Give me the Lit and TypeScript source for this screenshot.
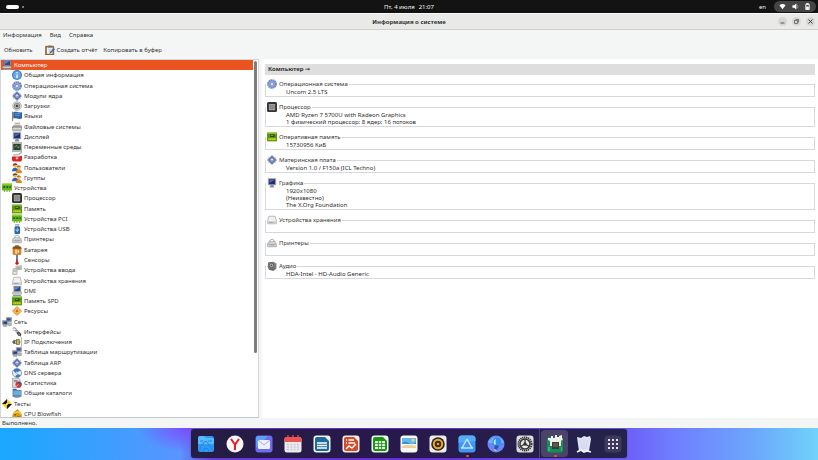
import { LitElement, html, svg, css, TemplateResult, SVGTemplateResult } from "lit";
import { customElement, property, state } from "lit/decorators.js";
import { classMap } from "lit/directives/class-map.js";

const monitor = svg`<path d="M2 1h12v10H2z" fill="#b9bec4" stroke="#6b7078" stroke-width=".8"/><path d="M3 2h10v8H3z" fill="#1d2f73"/><path d="M4 3h8L4 8z" fill="#5366ad"/><path d="M6 11h4l2 4H4z" fill="#8a8f96"/>`;
const computer = svg`<path d="M3 0h11v9H3z" fill="#c4cad2" stroke="#52596a" stroke-width=".8"/><path d="M4 1h9v7H4z" fill="#2d4b86"/><path d="M5 2h7L5 6z" fill="#6c8ec4"/><path d="M1 10h14v3H1z" fill="#d9dce0" stroke="#6b7078" stroke-width=".7"/><path d="M2 14h12l1 2H1z" fill="#8e99ac"/>`;
const gear = svg`<circle cx="8" cy="8" r="6" fill="#8fa8dc" stroke="#6a83bf" stroke-width="3.600" stroke-dasharray="2.400 .740"/><circle cx="8" cy="8" r="5" fill="#8ba3da"/><circle cx="8" cy="8" r="2.500" fill="#eef2fc" stroke="#6a83bf"/>`;
const diamond = svg`<path d="M8 0l8 8-8 8-8-8z" fill="#8896c4"/><path d="M8 2l6 6-6 6-6-6z" fill="#5468a4"/><path d="M8 4l4 4-4 4-4-4z" fill="#93a5d8"/><path d="M8 5l2 3H6z" fill="#e3e9fa"/><path d="M2 4l3 2M14 4l-3 2M2 12l3-2M14 12l-3-2" stroke="#8391b8"/>`;
const card = svg`<path d="M0 1h16v11H0z" fill="#68b31c"/><path d="M0 1h16v2H0z" fill="#8bd136"/><path d="M2 5h3v3H2zM7 5h3v3H7zM12 5h2v3h-2z" fill="#25561a"/><path d="M3 12h2v2H3zM7 12h2v2H7zM11 12h2v2h-2z" fill="#5b9a20"/>`;
const memory = svg`<path d="M0 1h16v14H0z" fill="#57980f"/><path d="M0 1h16v2H0z" fill="#80c02d"/><path d="M5 4h7v4H5z" fill="#25471a"/><path d="M6 5h4v1H6z" fill="#b4d24d"/><path d="M2 10h12v3H2z" fill="#d9d01e"/><path d="M4 10v3M7 10v3M10 10v3" stroke="#93900f" stroke-width=".7"/>`;
const users = svg`<circle cx="5" cy="4" r="3.400" fill="#f0b56a"/><path d="M1 4C1-1 9-1 9 4 6 2 4 4 1 4z" fill="#79401c"/><path d="M0 13c0-7 10-7 10 0z" fill="#2e62b5"/><circle cx="11" cy="7" r="3" fill="#f4be78"/><path d="M8 7c0-4 6-4 6 0-2-2-4 0-6 0z" fill="#b0601b"/><path d="M6 16c0-8 10-8 10 0z" fill="#dd8c1c"/>`;
const drive = svg`<path d="M3 2h10l2 7v5H1V9z" fill="#f1f1f1" stroke="#8a8a8a" stroke-width=".9"/><path d="M1 10h14v4H1z" fill="#cfcfcf"/><path d="M3 12h7" stroke="#8d8d8d"/>`;
const printer = svg`<path d="M4 7q0-5 4-5t4 5" fill="#fafafa" stroke="#999" stroke-width="1.200"/><path d="M3 6h10l2 3v5H1V9z" fill="#dedede" stroke="#858585" stroke-width=".9"/><path d="M2 10h12" stroke="#777"/><path d="M4 12h8v1H4z" fill="#9aa"/>`;
const chip = svg`<rect width="16" height="16" rx="2.500" fill="#343434"/><rect x="3" y="3" width="10" height="10" rx="1" fill="#a0a0a0"/><path d="M4 6h8M4 8h8M4 10h8" stroke="#6f6f6f"/>`;
const network = svg`<path d="M7 1h8v6H7z" fill="#cdd2d8" stroke="#5f6775"/><path d="M8 2h6v4H8z" fill="#2c4f97"/><path d="M1 6h8v6H1z" fill="#cdd2d8" stroke="#5f6775"/><path d="M2 7h6v4H2z" fill="#1f3f85"/><path d="M10 9h5v5h-5zM2 13h6v2H2z" fill="#b0b4ba" stroke="#70757d" stroke-width=".6"/>`;
const ICONS: Record<string, SVGTemplateResult> = {
  monitor, computer, gear, diamond, card, memory, users, drive, printer, chip, network,
  info: svg`<circle cx="8" cy="8" r="8" fill="#3f7fc8"/><circle cx="8" cy="8" r="6" fill="#6aa7e4"/><path d="M7 7h2v6H7zM7 3h2v2H7z" fill="#fff"/>`,
  boot: svg`<circle cx="8" cy="8" r="7" fill="#dedede" stroke="#9a9a9a"/><circle cx="8" cy="8" r="4.500" fill="#b5b5b5" stroke="#666"/><circle cx="8" cy="8" r="2" fill="#444"/>`,
  flag: svg`<path d="M1 1v15" stroke="#86643a" stroke-width="1.500"/><path d="M2 2c4-2 8 1 14 0v10c-5 2-9-1-14 0z" fill="#2d64ac"/><path d="M5 4h8M5 7h8" stroke="#6f9ed8" stroke-width="1.300"/>`,
  files: svg`<path d="M4 1h9v3H4z" fill="#b5b5b5"/><path d="M2 5h13l1 3v5H0V8z" fill="#999"/><path d="M1 8h14v4H1z" fill="#e0e0e0"/><path d="M0 9h16" stroke="#777"/><path d="M1 14h14" stroke="#aaa" stroke-width="2"/>`,
  env: svg`<path d="M0 1h16v14H0z" fill="#c5c9c0" stroke="#777" stroke-width=".8"/><path d="M2 3h12v10H2z" fill="#2b4230"/><path d="M4 9l3-4 3 5 2-4" stroke="#8bb87a" fill="none"/>`,
  knife: svg`<path d="M2 5l9-1 5-4" fill="none" stroke="#a1a4a8" stroke-width="1.800"/><path d="M0 7h11l5-1v7l-2 2H2l-2-2z" fill="#dc2424"/><path d="M6 10h4M8 8v4" stroke="#fff" stroke-width="1.200"/>`,
  usb: svg`<path d="M6 0h5v4H6z" fill="#cfd4dc" stroke="#6e7889" stroke-width=".8"/><rect x="4" y="4" width="9" height="12" rx="2" fill="#2e67a9"/><path d="M8.500 6v7M6.500 8v2l2 1.500 2-1.500V8" stroke="#d0e3f7" fill="none"/>`,
  battery: svg`<path d="M5 0h6v3H5z" fill="#888"/><rect x="1" y="2" width="14" height="14" rx="3" fill="#d6822a"/><path d="M1 6h14V4q-2-2-7-2T1 4z" fill="#77531c"/><path d="M5 7h3v7H5z" fill="#ffd89a"/><path d="M9 7l3 3-3 4" fill="#fff0c8"/>`,
  sensor: svg`<path d="M8 0v11" stroke="#32457b" stroke-width="2.200"/><path d="M8 7v5" stroke="#ca2020" stroke-width="2"/><circle cx="8" cy="13" r="2.600" fill="#c71919"/>`,
  input: svg`<path d="M6 2l10-1v6l-9 1z" fill="#d8d8d2" stroke="#8d8d88" stroke-width=".8"/><path d="M8 4l6-.500M8 6l6-.500" stroke="#888"/><path d="M2 6h6v9H1z" fill="#e7e7e2" stroke="#8d8d88"/><path d="M4.500 6v4M1.500 10h6" stroke="#999"/>`,
  resources: svg`<path d="M8 0l8 8-8 8-8-8z" fill="#e99a35"/><path d="M8 2v12M2 8h12M5 5l6 6M11 5l-6 6" stroke="#fae2b5" stroke-width="1.100"/><circle cx="8" cy="8" r="2" fill="#c9731b"/>`,
  iface: svg`<path d="M1 2c4-2 7 1 5 4 4-2 5 2 4 4" fill="none" stroke="#777" stroke-width="1.600"/><path d="M2 5c5 0 6 5 11 5" fill="none" stroke="#aaa" stroke-width="2"/><path d="M7 9l4-2 4 4-1 4-4-1z" fill="#4a4e54"/><path d="M10 11l3 2" stroke="#d3d37e"/>`,
  plug: svg`<path d="M0 8h5" stroke="#555" stroke-width="1.600"/><path d="M2 5h3v6H2z" fill="#555"/><path d="M7 4h5v8H7z" fill="#c6b34b" stroke="#625d36"/><path d="M5 6h3M5 10h3M12 8h2" stroke="#555" stroke-width="1.300"/><path d="M15.500 0v16" stroke="#777"/>`,
  globe: svg`<circle cx="8" cy="8" r="7.300" fill="#e2ecf8" stroke="#4473ad"/><path d="M2 4c3-4 9-4 12 0l-4 2-2 3-3-2z" fill="#3f74b5"/><path d="M5 13l4-3 5 1c-2 4-6 5-9 2z" fill="#3f74b5"/><path d="M7 5l3 3H7z" fill="#fff"/>`,
  stats: svg`<path d="M1 0h9l3 3v12H1z" fill="#e0e0e0" stroke="#777"/><path d="M3 4h6M3 6h6" stroke="#557"/><circle cx="10.500" cy="10.500" r="5" fill="#d3322e"/><path d="M10.500 10.500V5.500a5 5 0 0 1 5 5z" fill="#355da8"/><path d="M10.500 10.500l-4 3" stroke="#fff"/>`,
  folder: svg`<path d="M1 1h6l1 2h7v11H1z" fill="#356ca8"/><path d="M2 4h13v8H2z" fill="#77a9d8"/><path d="M4 15h8" stroke="#999" stroke-width="1.500"/>`,
  radiation: svg`<path d="M8 0l8 8-8 8-8-8z" fill="#f0cb19"/><path d="M8 0v8H0zM8 8h8l-8 8z" fill="#161616"/><circle cx="8" cy="8" r="1.500" fill="#fff3b8"/>`,
  fish: svg`<path d="M5 3l4-3 3 4c4 2 5 8 2 12H2C-1 12 1 6 5 3z" fill="#d99a13"/><path d="M3 7c4-3 8-3 11 1" stroke="#f5cb4b" stroke-width="2" fill="none"/><circle cx="5" cy="9" r="1.200" fill="#4b3608"/><path d="M8 12h5" stroke="#956100"/>`,
  audio: svg`<path d="M2 2l8-1 5 3v8l-5 4-7-2-2-5z" fill="#6b6b6b"/><path d="M3 4l8-1 3 2M2 7l9-1 3 2M3 10l8-1 3 2" stroke="#a9a9a9" fill="none"/><circle cx="7" cy="7" r="3.500" fill="#bbb" stroke="#444"/><circle cx="7" cy="7" r="1.500" fill="#4b4b4b"/>`,
  report: svg`<path d="M1 2h13v14H1z" fill="#a56f2f" stroke="#6b491f"/><path d="M3 4h9v10H3z" fill="#f4f6f9"/><path d="M5 1h6v3H5z" fill="#6f7378"/><path d="M5 7h5l-4 4h5" stroke="#9badc8" fill="none"/><path d="M8 11l6-6 2 2-7 6-2 1z" fill="#3769b4"/>`,
};

const DOCK: Record<string, SVGTemplateResult> = {
  files: svg`<rect x="1" y="1" width="16" height="16" rx="2.500" fill="#2f9af3"/><path d="M1 3q0-2 2-2h4l2 2h6q2 0 2 2v4H1z" fill="#55baff"/><path d="M3 15c0-7 3-3 3-6s4-3 5-1 1 3 2 3 2 2 2 4M6 17c0-5 6-5 6 0M3 6h3M11 6h4" fill="none" stroke="#1f80da" stroke-width=".9"/>`,
  browser: svg`<circle cx="9" cy="9" r="8.500" fill="#f7f7f7"/><path d="M5 4l4 5.500L13 4M9 9v6" fill="none" stroke="#f01822" stroke-width="2"/>`,
  mail: svg`<rect x=".500" y=".500" width="17" height="17" rx="3" fill="#6c6cf0"/><path d="M1 4q0-3 3-3h9L1 13z" fill="#5ba2f7"/><rect x="3" y="5" width="12" height="9" rx="1" fill="#eef0ff"/><path d="M3 5l6 5 6-5" fill="none" stroke="#a4abec"/>`,
  calendar: svg`<rect x=".500" y="2" width="17" height="15.500" rx="2.500" fill="#ececf0"/><path d="M.500 7V4q0-2 2-2h13q2 0 2 2v3z" fill="#ef5350"/><path d="M4 0v4M9 0v4M14 0v4" stroke="#df5a5a" stroke-width="1.200"/><path d="M3 9.500h12M3 12h12M3 14.500h12" stroke="#c8c8d0" stroke-width="1.300" stroke-dasharray="2 1.300"/>`,
  writer: svg`<rect x=".500" y=".500" width="17" height="17" rx="3" fill="#f2f6f9"/><path d="M4 2h8l4 4v8q0 2-2 2H4q-2 0-2-2V4q0-2 2-2z" fill="#1d6a9e"/><path d="M4 8h10M4 10.500h10M4 13h10" stroke="#fff" stroke-width="1.300"/>`,
  impress: svg`<rect x=".500" y=".500" width="17" height="17" rx="3" fill="#f8efeb"/><path d="M4 2h8l4 4v8q0 2-2 2H4q-2 0-2-2V4q0-2 2-2z" fill="#d44b27"/><path d="M4 5h1M6.500 5H12M4 8h1M6.500 8H13M4 14l3-3 3 2 4-4" fill="none" stroke="#fff" stroke-width="1.400"/>`,
  calc: svg`<rect x=".500" y=".500" width="17" height="17" rx="3" fill="#f0f8ef"/><path d="M4 2h8l4 4v8q0 2-2 2H4q-2 0-2-2V4q0-2 2-2z" fill="#18980f"/><path d="M4 6h10v8H4z" fill="#fff"/><path d="M4 8.700h10M4 11.400h10M7.300 6v8M10.700 6v8" stroke="#18980f"/>`,
  photos: svg`<rect x=".500" y=".500" width="17" height="17" rx="3" fill="#f8f8f5"/><path d="M2 3h14v6H2z" fill="#5fbaf2"/><circle cx="13" cy="5" r="1.600" fill="#ffd447"/><path d="M2 8q4-3 7 0t7-1v2H2z" fill="#3b8fd0"/><path d="M2 11q6-2 14 0v2H2z" fill="#edcf9a"/>`,
  music: svg`<rect x=".500" y=".500" width="17" height="17" rx="3" fill="#ededec"/><circle cx="9" cy="9" r="6.800" fill="#2b2926"/><circle cx="9" cy="9" r="4.200" fill="#2b2926" stroke="#f2a81c" stroke-width="2"/><circle cx="9" cy="9" r="1.300" fill="#f2a81c"/>`,
  store: svg`<rect x=".500" y=".500" width="17" height="17" rx="3" fill="#3e97f0"/><path d="M.500 8V4q0-3.500 3.500-3.500h10q3.500 0 3.500 3.500v2z" fill="#55acf6"/><path d="M9 4L4 13M9 4l5 9M3 13h12" stroke="#c4e4ff" stroke-width="1.500" fill="none"/>`,
  tips: svg`<circle cx="9" cy="9" r="8.500" fill="#6a86f3"/><path d="M1 8a8.500 8.500 0 0 1 16 0z" fill="#6fb0f8"/><circle cx="10" cy="7" r="4.400" fill="#3590e8"/><path d="M8 10l4 1-2 4-3-1z" fill="#2358b8"/><path d="M9 4q-3 1-2 5l2 1q-1-3 0-6z" fill="#b5ecff"/><path d="M7 14l3 1-1 1-2-1z" fill="#f1c452"/>`,
  settings: svg`<rect x=".500" y=".500" width="17" height="17" rx="3" fill="#dcdcdc"/><circle cx="9" cy="9" r="6.600" fill="none" stroke="#333" stroke-width="1.800" stroke-dasharray="1.300 .7"/><circle cx="9" cy="9" r="5" fill="#e8e8e8" stroke="#333" stroke-width="1.400"/><path d="M9 4v5l4.500 2.500M9 9l-4.500 2.500" stroke="#333" stroke-width="1.300" fill="none"/><circle cx="9" cy="9" r="1.700" fill="#333"/>`,
  hardinfo: svg`<rect x="1" y="2" width="16" height="15.500" rx="2.500" fill="#11905a"/><path d="M2 3h3V1h2v2h2V0h2v2h2V1l3-1v3l1 1-2 2v5h-2V7H6v4H4V6L2 5z" fill="#f1f2ee"/><path d="M6 7h7v7H6z" fill="#3f3d38"/><path d="M7 8h5v4H7z" fill="#66574a"/><path d="M2 12h2v4H2zM15 12h1v4h-1z" fill="#2bb678"/>`,
  trash: svg`<path d="M2 2l4 1 3-2 3 1 3-1 1 3-2 12H4z" fill="#dfe2f4"/><path d="M5 5l2 9M9 4v10M12 5l-1 9" stroke="#c6cae2" stroke-width=".7" fill="none"/><path d="M2 17l4-2 3 2 3-1 4 1" stroke="#f4f4fb" stroke-width="1.700" fill="none"/>`,
  apps: svg`<rect x=".500" y=".500" width="17" height="17" rx="3.500" fill="#3f395f"/><path d="M4 5h2M8 5h2M12 5h2M4 9h2M8 9h2M12 9h2M4 13h2M8 13h2M12 13h2" stroke="#e4e2ec" stroke-width="2"/>`,
};

interface Node { label: string; icon: string; root?: boolean; }
const root = (label: string, icon: string): Node => ({ label, icon, root: true });
const leaf = (label: string, icon: string): Node => ({ label, icon });

const TREE: Node[] = [
  root("Компьютер", "computer"),
  leaf("Общая информация", "info"),
  leaf("Операционная система", "gear"),
  leaf("Модули ядра", "diamond"),
  leaf("Загрузки", "boot"),
  leaf("Языки", "flag"),
  leaf("Файловые системы", "files"),
  leaf("Дисплей", "monitor"),
  leaf("Переменные среды", "env"),
  leaf("Разработка", "knife"),
  leaf("Пользователи", "users"),
  leaf("Группы", "users"),
  root("Устройства", "card"),
  leaf("Процессор", "chip"),
  leaf("Память", "memory"),
  leaf("Устройства PCI", "card"),
  leaf("Устройства USB", "usb"),
  leaf("Принтеры", "printer"),
  leaf("Батарея", "battery"),
  leaf("Сенсоры", "sensor"),
  leaf("Устройства ввода", "input"),
  leaf("Устройства хранения", "drive"),
  leaf("DMI", "computer"),
  leaf("Память SPD", "memory"),
  leaf("Ресурсы", "resources"),
  root("Сеть", "network"),
  leaf("Интерфейсы", "iface"),
  leaf("IP Подключения", "plug"),
  leaf("Таблица маршрутизации", "network"),
  leaf("Таблица ARP", "diamond"),
  leaf("DNS сервера", "globe"),
  leaf("Статистика", "stats"),
  leaf("Общие каталоги", "folder"),
  root("Тесты", "radiation"),
  leaf("CPU Blowfish", "fish"),
];

const SUMMARY: { title: string; icon: string; lines: string[] }[] = [
  { title: "Операционная система", icon: "gear", lines: ["Uncom 2.5 LTS"] },
  { title: "Процессор", icon: "chip", lines: ["AMD Ryzen 7 5700U with Radeon Graphics", "1 физический процессор; 8 ядер; 16 потоков"] },
  { title: "Оперативная память", icon: "memory", lines: ["15730956 КиБ"] },
  { title: "Материнская плата", icon: "diamond", lines: ["Version 1.0 / F150a (ICL Techno)"] },
  { title: "Графика", icon: "monitor", lines: ["1920x1080", "(Неизвестно)", "The X.Org Foundation"] },
  { title: "Устройства хранения", icon: "drive", lines: [] },
  { title: "Принтеры", icon: "printer", lines: [] },
  { title: "Аудио", icon: "audio", lines: ["HDA-Intel - HD-Audio Generic"] },
];

const APPS: { id: string; name: string; running?: boolean; active?: boolean }[] = [
  { id: "files", name: "Файлы" },
  { id: "browser", name: "Браузер" },
  { id: "mail", name: "Почта" },
  { id: "calendar", name: "Календарь" },
  { id: "writer", name: "Документы" },
  { id: "impress", name: "Презентации" },
  { id: "calc", name: "Таблицы" },
  { id: "photos", name: "Фотографии" },
  { id: "music", name: "Музыка" },
  { id: "store", name: "Приложения", running: true },
  { id: "tips", name: "Подсказки" },
  { id: "settings", name: "Настройки" },
  { id: "hardinfo", name: "Информация о системе", running: true, active: true },
  { id: "trash", name: "Корзина" },
  { id: "apps", name: "Все приложения" },
];

const reset = css`
  * { box-sizing: border-box; }
  h1, h2, h3, p, ul { margin: 0; padding: 0; }
  button { font: inherit; color: inherit; background: none; border: 0; padding: 0; line-height: inherit; }
  ul { list-style: none; }
  svg { display: block; flex: none; }
`;

@customElement("small-icon")
export class SmallIcon extends LitElement {
  static styles = css`
    :host { display: block; flex: none; width: 10px; height: 10px; }
    svg { display: block; width: 100%; height: 100%; }
  `;
  @property() name = "";
  render() {
    return html`<svg viewBox="0 0 16 16" aria-hidden="true">${ICONS[this.name]}</svg>`;
  }
}

@customElement("top-panel")
export class TopPanel extends LitElement {
  static styles = [reset, css`
    :host { display: grid; grid-template-columns: 1fr auto 1fr; align-items: center; height: 13px; background: #131313; color: #f2f2f2; }
    .spaces { display: flex; align-items: center; gap: 3px; padding-left: 6px; }
    .current { width: 13px; height: 4px; border-radius: 2px; background: #fff; }
    .other { width: 2px; height: 2px; border-radius: 1px; background: #999; }
    .clock { display: flex; gap: 4px; }
    .right { display: flex; justify-content: flex-end; align-items: center; gap: 8px; padding-right: 2px; }
    .status { display: flex; align-items: center; justify-content: space-evenly; width: 42px; height: 11px; border-radius: 6px; background: #454545; }
    .glyph { width: 7px; height: 7px; }
  `];
  render() {
    return html`
      <button class="spaces" aria-label="Обзор"><span class="current"></span><span class="other"></span></button>
      <button class="clock"><span>Пт, 4 июля</span><span>21:07</span></button>
      <div class="right">
        <button>en</button>
        <button class="status" aria-label="Состояние системы">
          <svg class="glyph" viewBox="0 0 16 16"><path d="M1 5q7-6 14 0L8 14z" fill="#fff"/></svg>
          <svg class="glyph" viewBox="0 0 16 16"><path d="M1 5h4l5-4v14l-5-4H1z" fill="#fff"/><path d="M12 4q3 4 0 8" stroke="#aaa" stroke-width="1.500" fill="none"/></svg>
          <svg class="glyph" viewBox="0 0 16 16"><path d="M4 3h8v12H4zM6 1h4v2H6z" fill="none" stroke="#fff" stroke-width="2"/><path d="M5 8h6v6H5z" fill="#fff"/></svg>
        </button>
      </div>`;
  }
}

@customElement("nav-tree")
export class NavTree extends LitElement {
  static styles = [reset, css`
    :host { display: flex; min-height: 0; overflow: hidden; background: #fff; border: 1px solid #d3d7dc; border-bottom-color: #c3c8ce; }
    .rows { flex: 1; display: grid; grid-template-rows: repeat(35, 1fr); height: calc(100% + 2px); }
    .row { display: flex; align-items: center; gap: 2px; min-height: 0; padding-left: 11px; white-space: nowrap; }
    .root { padding-left: 1px; }
    .selected { background: #e95420; color: #fff; }
    .track { width: 5px; padding: 1px 1px 0; }
    .thumb { height: 82%; border-radius: 2px; background: #7d7d7d; }
  `];
  @state() private selected = 0;
  render() {
    return html`
      <ul class="rows" role="tree" aria-label="Разделы">
        ${TREE.map((n, i) => html`
          <li class=${classMap({ row: true, root: !!n.root, selected: i === this.selected })}
              role="treeitem" aria-selected=${i === this.selected} @click=${() => (this.selected = i)}>
            <small-icon name=${n.icon}></small-icon><span>${n.label}</span>
          </li>`)}
      </ul>
      <div class="track"><div class="thumb"></div></div>`;
  }
}

@customElement("summary-view")
export class SummaryView extends LitElement {
  static styles = [reset, css`
    :host { display: block; min-width: 0; background: #fff; }
    .page { padding: 5px 3px 0; }
    .heading { height: 11px; margin-bottom: 9px; padding-left: 3px; background: #dedede; color: #2e2e2e; font: 700 6px/11px "Noto Sans", "DejaVu Sans", sans-serif; }
    .group { min-height: 13px; margin-bottom: 10px; border: 1px solid #d5d9df; }
    .title { display: flex; align-items: center; gap: 2px; width: fit-content; height: 10px; margin-top: -6px; padding: 0 1px; background: #fff; font-size: 6px; font-weight: 400; }
    .lines { padding-left: 20px; line-height: 7px; color: #2e2e2e; }
  `];
  private group(title: string, icon: string, lines: string[]): TemplateResult {
    return html`
      <section class="group">
        <h3 class="title"><small-icon name=${icon}></small-icon><span>${title}</span></h3>
        <div class="lines">${lines.map((l) => html`<p>${l}</p>`)}</div>
      </section>`;
  }
  render() {
    return html`
      <div class="page">
        <h2 class="heading">Компьютер →</h2>
        ${SUMMARY.map((s) => this.group(s.title, s.icon, s.lines))}
      </div>`;
  }
}

@customElement("app-dock")
export class AppDock extends LitElement {
  static styles = [reset, css`
    :host { display: block; }
    .desktop { display: flex; justify-content: center; padding: 1px 0 2px;
      background:
        radial-gradient(ellipse 50px 24px at 23% 0, #7a4dff, #7a4dff00),
        linear-gradient(90deg, #1aa8fd 0%, #3a9fff 12%, #5a94ff 22%, #6b3fe0 26%, #6b2fd8 50%, #6d5cf6 76%, #6f7cff 82%, #6ca6fc 92%, #70d3fa 100%); }
    .dock { display: flex; border-radius: 3px; background: linear-gradient(90deg, #251d43, #28194d 50%, #24234a); box-shadow: 0 0 1px #1b1638; }
    .app { position: relative; display: flex; align-items: center; justify-content: center; width: 29px; height: 29px; }
    .app svg { width: 18px; height: 18px; }
    .divided { width: 30px; border-left: 1px solid #4d446c; }
    .active::before { content: ""; position: absolute; inset: 1px; border-radius: 4px; background: #4c4468; }
    .active svg { position: relative; }
    .running::after { content: ""; position: absolute; bottom: 1px; left: 50%; width: 3px; height: 2px; margin-left: -1px; border-radius: 1px; background: #e95420; }
  `];
  render() {
    return html`<div class="desktop"><nav class="dock" aria-label="Приложения">
      ${APPS.map((a) => html`
        <button class=${classMap({ app: true, running: !!a.running, active: !!a.active, divided: !!a.active })} aria-label=${a.name}>
          <svg viewBox="0 0 18 18" aria-hidden="true">${DOCK[a.id]}</svg>
        </button>`)}
    </nav></div>`;
  }
}

@customElement("app-root")
export class AppRoot extends LitElement {
  static styles = [reset, css`
    :host { display: flex; flex-direction: column; height: 100vh; overflow: hidden; background: #f4f6f6; color: #353535;
      font: 6px/10px "Noto Sans", "Open Sans", sans-serif; }
    .titlebar { display: grid; grid-template-columns: 1fr auto 1fr; align-items: center; height: 17px; border-top: 1px solid #fafafa; border-bottom: 1px solid #cfcfcf; background: #e9e9e8; }
    .title { grid-column: 2; font-size: 6px; font-weight: 700; }
    .controls { display: flex; justify-content: flex-end; gap: 5px; padding-right: 3px; }
    .control { display: grid; place-items: center; width: 9px; height: 9px; border-radius: 50%; background: #d6d6d5; }
    .control svg { width: 5px; height: 5px; }
    .menubar { display: flex; gap: 8px; height: 10px; padding-left: 3px; }
    .toolbar { display: flex; align-items: center; height: 19px; padding-left: 4px; gap: 6px; }
    .tool { display: flex; align-items: center; gap: 2px; }
    .report { margin-left: 6px; }
    .main { flex: 1; min-height: 0; display: grid; grid-template-columns: 259px 1fr; gap: 3px; }
    .statusbar { height: 10px; padding-left: 2px; }
  `];
  render() {
    return html`
      <top-panel></top-panel>
      <header class="titlebar">
        <h1 class="title">Информация о системе</h1>
        <div class="controls">
          <button class="control" aria-label="Свернуть"><svg viewBox="0 0 10 10"><path d="M1 8h8" stroke="#555" stroke-width="2"/></svg></button>
          <button class="control" aria-label="Восстановить"><svg viewBox="0 0 10 10"><path d="M1 3h6v6H1zM3 1h6v6" fill="none" stroke="#555" stroke-width="1.500"/></svg></button>
          <button class="control" aria-label="Закрыть"><svg viewBox="0 0 10 10"><path d="M1 1l8 8M9 1l-8 8" stroke="#444" stroke-width="2"/></svg></button>
        </div>
      </header>
      <nav class="menubar"><button>Информация</button><button>Вид</button><button>Справка</button></nav>
      <div class="toolbar" role="toolbar">
        <button class="tool">Обновить</button>
        <button class="tool report"><small-icon name="report"></small-icon>Создать отчёт</button>
        <button class="tool">Копировать в буфер</button>
      </div>
      <main class="main"><nav-tree></nav-tree><summary-view></summary-view></main>
      <footer class="statusbar">Выполнено.</footer>
      <app-dock></app-dock>`;
  }
}
